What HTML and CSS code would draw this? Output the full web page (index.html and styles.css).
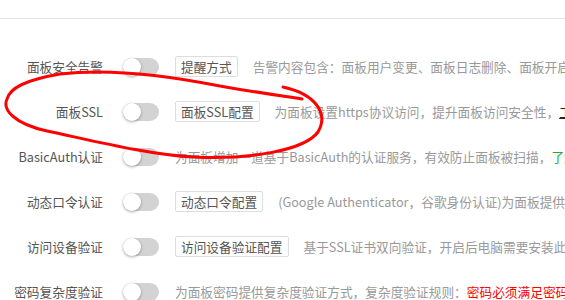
FILE: index.html
```html
<!DOCTYPE html>
<html lang="zh-CN">
  <head>
    <meta charset="UTF-8" />
    <meta name="viewport" content="width=device-width, initial-scale=1.0" />
    <title>面板设置</title>
    <link rel="stylesheet" href="styles.css">
  </head>
  <body>
    <div class="tab-bar"></div>

    <!-- 安全设置列表 -->
    <div class="setting-list">
      <div class="setting-row">
        <span class="setting-label">面板安全告警</span>
        <span class="switch"><span class="knob"></span></span>
        <button class="config-btn">提醒方式</button>
        <span class="setting-desc">告警内容包含：面板用户变更、面板日志删除、面板开启开发者模式</span>
      </div>
      <div class="setting-row">
        <span class="setting-label">面板SSL</span>
        <span class="switch"><span class="knob"></span></span>
        <button class="config-btn">面板SSL配置</button>
        <span class="setting-desc">为面板设置https协议访问，提升面板访问安全性，<span class="link-dark">工</span></span>
      </div>
      <div class="setting-row">
        <span class="setting-label">BasicAuth认证</span>
        <span class="switch"><span class="knob"></span></span>
        <span class="setting-desc no-btn">为面板增加一道基于BasicAuth的认证服务，有效防止面板被扫描，<span class="link-green">了解详情</span></span>
      </div>
      <div class="setting-row">
        <span class="setting-label">动态口令认证</span>
        <span class="switch"><span class="knob"></span></span>
        <button class="config-btn">动态口令配置</button>
        <span class="setting-desc">(Google Authenticator，谷歌身份认证)为面板提供动态口令认证</span>
      </div>
      <div class="setting-row">
        <span class="setting-label">访问设备验证</span>
        <span class="switch"><span class="knob"></span></span>
        <button class="config-btn">访问设备验证配置</button>
        <span class="setting-desc">基于SSL证书双向验证，开启后电脑需要安装此证书</span>
      </div>
      <div class="setting-row">
        <span class="setting-label">密码复杂度验证</span>
        <span class="switch"><span class="knob"></span></span>
        <span class="setting-desc no-btn">为面板密码提供复杂度验证方式，复杂度验证规则：<span class="warn-red">密码必须满足密码长度</span></span>
      </div>
    </div>

    <!-- 手画的红圈标注 -->
    <svg class="mark" width="565" height="300" viewBox="0 0 565 300">
      <path d="M283 87 C315 94, 329 113, 318 132 C305 150, 250 160, 193 157 C150 155, 90 140, 47 131 C15 124, 2 110, 7 99 C10 88, 25 80, 60 74 C110 68, 170 76, 220 86 C260 93, 290 97, 302 99"
            fill="none" stroke="#f00" stroke-width="3" stroke-linecap="round" />
    </svg>
  </body>
</html>
```

FILE: styles.css
```css
body {
  margin: 0;
  font-family: "Noto Sans CJK SC", "Liberation Sans", sans-serif;
  background: #fff;
  overflow: hidden;
  width: 565px;
  height: 300px;
  position: relative;
}

.tab-bar {
  height: 18px;
  border-bottom: 1px solid #e4e4e4;
}

.setting-list {
  padding-top: 25px;
}

.setting-row {
  display: flex;
  align-items: center;
  height: 45px;
  white-space: nowrap;
  font-size: 12.7px;
}

.setting-label {
  width: 103px;
  flex-shrink: 0;
  text-align: right;
  color: #555;
}

/* 开关 */
.switch {
  position: relative;
  flex-shrink: 0;
  width: 36px;
  height: 18px;
  margin-left: 20px;
  border-radius: 9px;
  background: #d3d3d3;
}
.knob {
  position: absolute;
  left: 0;
  top: 0;
  width: 18px;
  height: 18px;
  border-radius: 50%;
  background: #fff;
  box-shadow: 0 1px 3px rgba(0, 0, 0, 0.35);
}

.config-btn {
  flex-shrink: 0;
  margin-left: 16px;
  height: 21px;
  padding: 0 5px;
  border: 1px solid #ddd;
  border-radius: 2px;
  background: #fff;
  color: #555;
  font-family: inherit;
  font-size: 12.7px;
  line-height: 19px;
}

.setting-desc {
  margin-left: 15px;
  color: #999;
}
.setting-desc.no-btn {
  margin-left: 16px;
}

.link-dark {
  color: #222;
  text-decoration: underline;
}
.link-green {
  color: #20a53a;
}
.warn-red {
  color: #f00;
}

/* 标注层 */
.mark {
  position: absolute;
  left: 0;
  top: 0;
  pointer-events: none;
}
```
